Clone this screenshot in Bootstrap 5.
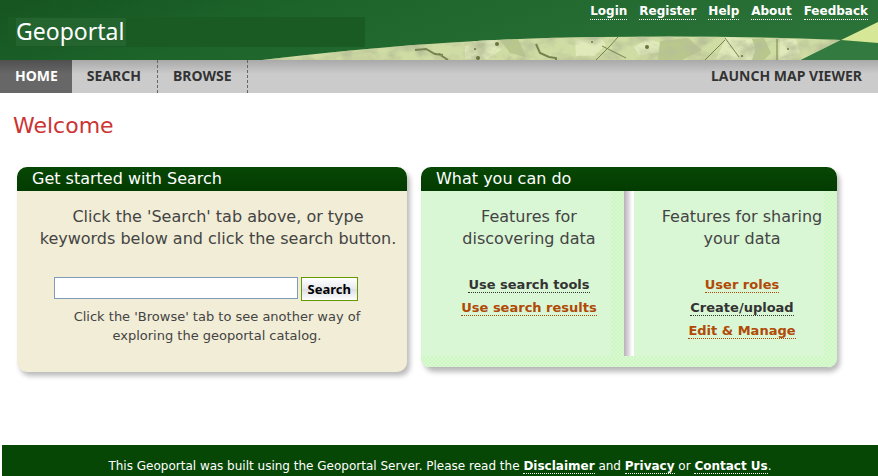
<!DOCTYPE html>
<html lang="en">
<head>
<meta charset="utf-8">
<meta name="viewport" content="width=device-width, initial-scale=1">
<title>Geoportal</title>
<link href="https://cdn.jsdelivr.net/npm/bootstrap@5.3.0/dist/css/bootstrap.min.css" rel="stylesheet">
<style>
  body { font-family: "DejaVu Sans", Verdana, sans-serif; font-size: 12px; line-height: 19px; color: #444; }
  .site-banner { height: 60px; background: #1b6128; }
  .banner-art { position: absolute; inset: 0; width: 100%; height: 100%; }
  .site-name { font: 23px/28px "Noto Sans", sans-serif; color: #fff; padding: 17px 0 0 16px; }
  .dotted { color: inherit; font-weight: bold; text-decoration: none; border-bottom: 1px dotted currentColor; }
  .dotted:hover { border-bottom-style: solid; }
  .account-links { gap: 12px; padding: 4px 10px 0 0; color: #fff; line-height: 15px; }
  .tabs { background: linear-gradient(#a9a9a9, #cbcbcb 14px); font: bold 14px/32px "Noto Sans", sans-serif; }
  .tabs a { color: #333; text-decoration: none; padding: 0 16px 1px 15px; border-right: 1px dashed #666; }
  .tabs a.current { color: #fff; background: linear-gradient(#505050, #676767 14px); border-right: 0; padding-right: 14px; }
  .tabs a.launch { border-right: 0; }
  .page { padding: 18px 41px 0 17px; }
  .welcome { font-size: 22px; line-height: 30px; color: #c33; margin: 0 0 26px -4px; }
  .panels { gap: 14px; }
  .panel { border-radius: 10px; box-shadow: 3px 4px 5px #bbb; overflow: hidden; }
  .panel-search { flex: 390 1 0; background: #f1edd6; min-height: 205px; }
  .panel-features { flex: 416 1 0; background: #d9f6d5; min-height: 201px; }
  .panel-title { font-size: 16px; line-height: 24px; color: #fff; background: linear-gradient(#074705, #033b00); padding-left: 15px; margin: 0; }
  .lead-in { font-size: 16px; line-height: 22px; color: #444; margin: 0; }
  .search-body { padding: 15px 8px 0 20px; }
  .search-form { gap: 3px; margin-top: 27px; padding: 0 41px 0 17px; }
  .search-form input { min-width: 0; height: 22px; border: 1px solid #7f9db9; background: #fff; }
  .search-form button { height: 24px; padding: 0 6px; border: 1px solid #690; background: linear-gradient(#fff, #e9eaef 48%, #dcdde5 49%, #fff); color: #000; font: bold 13px/20px "Noto Sans", sans-serif; }
  .hint { font-size: 13px; margin: 6px 22px 0 20px; }
  .feature { padding: 15px 0 0 13px; position: relative; }
  .grain { background: repeating-conic-gradient(#c8f9c7 0 25%, #ddf6cd 0 50%) 0 0 / 4px 4px; }
  .grain-side { position: absolute; top: 0; right: 0; bottom: 0; width: 13px; }
  .grain-foot { height: 12px; border-bottom: 1px solid #bcb9bd; }
  .divider { width: 10px; background: linear-gradient(90deg, #b9b0ba, #dcd8dc 45%, #fff 80%); }
  .links { font-size: 13px; line-height: 15px; margin-top: 27px; gap: 7px; color: #333; }
  .orange { color: #b04a06; }
  .site-footer { margin-left: 2px; background: #074705; color: #fff; line-height: 15px; padding: 14px 0 2px; }
</style>
<script src="https://cdn.jsdelivr.net/npm/bootstrap@5.3.0/dist/js/bootstrap.bundle.min.js"></script>
</head>
<body class="d-flex flex-column min-vh-100">
<header>
  <div class="site-banner position-relative">
    <svg class="banner-art" viewBox="0 0 878 60" preserveAspectRatio="none" aria-hidden="true">
      <defs>
        <linearGradient id="green" x1="0" y1="0" x2="1" y2="0.2">
          <stop offset="0" stop-color="#165420"/><stop offset="0.35" stop-color="#1c642a"/><stop offset="1" stop-color="#2b7238"/>
        </linearGradient>
        <filter id="relief" x="0" y="0" width="100%" height="100%">
          <feTurbulence type="fractalNoise" baseFrequency="0.045 0.07" numOctaves="4" seed="8"/>
          <feColorMatrix values="0 0 0 0 0.47  0 0 0 0 0.52  0 0 0 0 0.31  2.6 0 0 0 -1.05"/>
        </filter>
        <clipPath id="terrain"><path d="M262 60Q450 38 600 37Q720 35 841 40L801 60Z"/></clipPath>
      </defs>
      <path fill="url(#green)" d="M0 0H878V60H0Z"/>
      <path fill="#1a5b24" d="M8 17H365V47H8Z"/>
      <path fill="#24652f" d="M16 18H126V46H16Z"/>
      <g clip-path="url(#terrain)">
        <path fill="#cfdca3" d="M250 30H850V60H250Z"/>
        <g fill="#e0e9ba"><path d="M465 47l12-8 20 0 4 11-14 9h-22zM575 41l26-3 5 7-12 11-18 0zM634 47l14-8 14 4-1 9-22 3zM726 37l26 2 6 21h-42zM780 39h16l4 13-9 8h-12z"/></g>
        <path fill="#b9c78d" d="M752 39l12-1 7 15-7 7h-12l4-12zM660 41l28-3 14 12-20 10h-24zM500 40l18-1 8 18-16-4z"/>
        <path filter="url(#relief)" d="M250 30H850V60H250Z"/>
        <g fill="none" stroke="#77834f"><path d="M415 50l11-1 9 5 8 1M439 54l9 6M536 44l4 9 9 4 7 1v3" stroke-width="2"/><path d="M596 60l14-14 8-9M705 60l20-20M725 38l14 19M777 39v21M602 46q12 6 24 12"/></g>
        <g fill="#68733f"><circle cx="592" cy="42" r="1"/><circle cx="647" cy="47" r="2"/><circle cx="742" cy="56" r="1"/><circle cx="788" cy="49" r="1"/><circle cx="497" cy="44" r="2"/><circle cx="475" cy="49" r="1"/><circle cx="478" cy="58" r="2"/></g>
      </g>
      <path fill="#327a40" d="M841 40L878 43V60H801Z"/>
      <path fill="#d6e797" d="M841 40L878 22V43Z"/>
    </svg>
    <div class="position-relative d-flex justify-content-between align-items-start">
      <div class="site-name">Geoportal</div>
      <nav class="account-links d-flex" aria-label="Account">
        <a class="dotted" href="#login">Login</a>
        <a class="dotted" href="#register">Register</a>
        <a class="dotted" href="#help">Help</a>
        <a class="dotted" href="#about">About</a>
        <a class="dotted" href="#feedback">Feedback</a>
      </nav>
    </div>
  </div>
  <nav class="tabs d-flex" aria-label="Main">
    <a class="current" href="#home" aria-current="page">HOME</a>
    <a href="#search">SEARCH</a>
    <a href="#browse">BROWSE</a>
    <a class="launch ms-auto" href="#map">LAUNCH MAP VIEWER</a>
  </nav>
</header>
<main class="page">
  <h1 class="welcome">Welcome</h1>
  <div class="panels d-flex align-items-start">
    <section class="panel panel-search">
      <h2 class="panel-title">Get started with Search</h2>
      <div class="search-body text-center">
        <p class="lead-in">Click the 'Search' tab above, or type keywords below and click the search button.</p>
        <form class="search-form d-flex">
          <input class="flex-fill" type="text" aria-label="Search keywords">
          <button type="submit">Search</button>
        </form>
        <p class="hint">Click the 'Browse' tab to see another way of exploring the geoportal catalog.</p>
      </div>
    </section>
    <section class="panel panel-features d-flex flex-column">
      <h2 class="panel-title">What you can do</h2>
      <div class="d-flex flex-fill text-center">
        <div class="feature w-50">
          <div class="grain grain-side"></div>
          <p class="lead-in position-relative">Features for<br>discovering data</p>
          <div class="links d-flex flex-column align-items-center">
            <a class="dotted" href="#tools">Use search tools</a>
            <a class="dotted orange" href="#results">Use search results</a>
          </div>
        </div>
        <div class="divider flex-shrink-0"></div>
        <div class="feature w-50">
          <div class="grain grain-side"></div>
          <p class="lead-in position-relative">Features for sharing<br>your data</p>
          <div class="links d-flex flex-column align-items-center">
            <a class="dotted orange" href="#roles">User roles</a>
            <a class="dotted" href="#create">Create/upload</a>
            <a class="dotted orange" href="#manage">Edit &amp; Manage</a>
          </div>
        </div>
      </div>
      <div class="grain grain-foot"></div>
    </section>
  </div>
</main>
<footer class="site-footer text-center mt-auto">
  This Geoportal was built using the Geoportal Server. Please read the <a class="dotted" href="#disclaimer">Disclaimer</a> and <a class="dotted" href="#privacy">Privacy</a> or <a class="dotted" href="#contact">Contact Us</a>.
</footer>
</body>
</html>
